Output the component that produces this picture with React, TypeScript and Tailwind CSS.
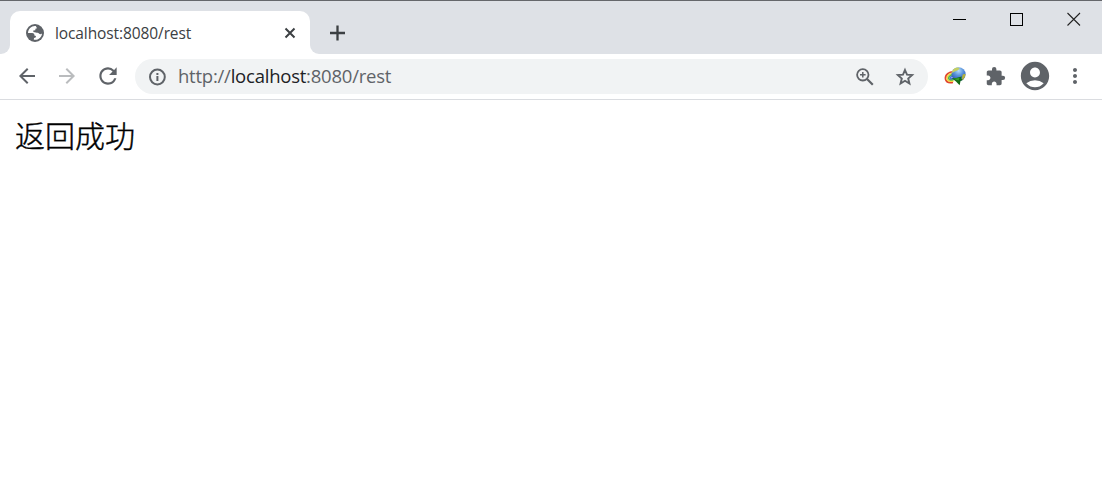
import React from 'react';
import {
  MdAccountCircle,
  MdArrowBack,
  MdArrowForward,
  MdExtension,
  MdMoreVert,
  MdRefresh,
} from 'react-icons/md';

const GlobeIcon = () => (
  <svg width="18" height="18" viewBox="0 0 18 18" className="shrink-0">
    <circle cx="9" cy="9" r="9" fill="#5f6368" />
    <path
      d="M9.8 2.1 C5.6 1.6 2.2 5 2 8.9 L6.2 9 C7.8 9.2 8.6 10 8.4 11.6 L10 12 L9.6 13.5 L8 14 L7.8 15.8 C12.4 16.4 15.8 13 16 9.4 C15 10.4 13.6 10.4 13 9.4 C12.4 8.2 10.8 8.8 9.8 8.4 L7.4 8 L7.3 6.6 L9.3 6.2 L9.4 4.8 L11 4.2 Z"
      fill="#fff"
    />
  </svg>
);

const InfoIcon = () => (
  <svg width="20" height="20" viewBox="0 0 20 20" fill="none" stroke="currentColor" strokeWidth="2" className="shrink-0">
    <circle cx="10.4" cy="10" r="7.4" />
    <path d="M10.4 9 V14 M10.4 6 V8" />
  </svg>
);

const ZoomIcon = () => (
  <svg width="20" height="20" viewBox="0 0 20 20" fill="none" stroke="currentColor" strokeWidth="1.8" className="shrink-0">
    <circle cx="7.8" cy="7.8" r="5.7" />
    <path d="M12 12 L17.8 17.8" strokeWidth="2.2" />
    <path d="M7.8 5 V10.6 M5 7.8 H10.6" strokeWidth="1.5" />
  </svg>
);

const StarIcon = () => (
  <svg width="20" height="20" viewBox="0 0 20 20" fill="none" stroke="currentColor" strokeWidth="1.9" className="shrink-0">
    <path d="M10 3 L12 7.7 L17.1 8.1 L13.2 11.5 L14.4 16.5 L10 13.8 L5.6 16.5 L6.8 11.5 L2.9 8.1 L8 7.7 Z" />
  </svg>
);

const DownloadManagerIcon = () => (
  <svg width="22" height="20" viewBox="0 0 22 20" className="shrink-0">
    <defs>
      <radialGradient id="ball" cx="0.5" cy="0.25" r="0.75">
        <stop offset="0" stopColor="#b4dcfa" />
        <stop offset="0.45" stopColor="#5a94dc" />
        <stop offset="1" stopColor="#2350ac" />
      </radialGradient>
    </defs>
    <g fill="none" strokeWidth="1.7">
      <path d="M10.5 5.8 C5 5.2 0.9 9 1.5 13 C2.1 16.2 5 17 9 16.3" stroke="#e0452f" />
      <path d="M11 7.2 C6 6.8 2.7 9.5 3.1 12.8 C3.6 15.2 6 15.6 9.5 14.8" stroke="#f3d640" />
      <path d="M11 8.7 C7 8.4 4.3 10.2 4.7 12.6 C5.2 14.2 7 14.2 9.5 13.4" stroke="#54bc45" />
      <path d="M11 10.1 C8.5 9.9 6 10.8 6.3 12.3 C7 13.2 8 12.9 10 12.2" stroke="#4a70dc" />
    </g>
    <circle cx="14.6" cy="8.2" r="7" fill="url(#ball)" />
    <path d="M8.2 5 C10 1.6 13.5 0.8 15.5 2 C15.4 4 12 4.8 8.2 7 Z" fill="#c3cf62" />
    <path d="M18.6 8.8 C19.5 8 20.6 7.8 21.5 8.4 C21 11.2 19.6 13.2 17.6 14.4 Z" fill="#b6b33a" />
    <path d="M7.8 12.2 L12 12 L17.8 10.6 L17 12.6 L18.8 14 L16.6 14.8 L15.6 19.2 L12 15.6 Z" fill="#126b15" />
    <path d="M9 12.8 L15.5 12 L14.6 14.4 Z" fill="#37a52c" />
  </svg>
);

const WindowControls = () => (
  <div className="flex pt-[11px] pr-[21px] gap-[43px]">
    <svg width="14" height="14" shapeRendering="crispEdges">
      <path d="M0 7.5 H13" stroke="#000" />
    </svg>
    <svg width="14" height="14" shapeRendering="crispEdges">
      <rect x="0.5" y="1.5" width="12" height="12" fill="none" stroke="#000" />
    </svg>
    <svg width="14" height="14">
      <path d="M0.5 1 L13 13.5 M13 1 L0.5 13.5" stroke="#222" strokeWidth="1.1" />
    </svg>
  </div>
);

const TabStrip = () => (
  <div className="flex justify-between h-[54px] bg-[#dee1e6] border-t border-[#65676b]">
    <div className="flex items-end">
      <div className="w-[10px] h-[10px] bg-white">
        <div className="w-full h-full bg-[#dee1e6] rounded-br-[9px]" />
      </div>
      <div className="flex items-center w-[300px] h-[43px] pl-4 pr-[14px] bg-white rounded-t-[10px]">
        <GlobeIcon />
        <span className="ml-[11px] pt-[2px] text-[15.5px] tracking-[-0.1px] text-[#3c4043] whitespace-nowrap">
          localhost:8080/rest
        </span>
        <svg width="12" height="12" className="ml-auto">
          <path d="M1.5 1.5 L10.5 10.5 M10.5 1.5 L1.5 10.5" stroke="#3c4043" strokeWidth="2" />
        </svg>
      </div>
      <div className="w-[10px] h-[10px] bg-white">
        <div className="w-full h-full bg-[#dee1e6] rounded-bl-[9px]" />
      </div>
      <svg width="16" height="16" className="ml-[9px] mb-[13px]">
        <path d="M8.5 0.5 V15.5 M1 8 H16" stroke="#3c4043" strokeWidth="2.3" />
      </svg>
    </div>
    <WindowControls />
  </div>
);

const AddressBar = () => (
  <div className="flex items-center w-[793px] h-[35px] ml-[14px] pl-[12px] pr-[13px] rounded-full bg-[#f1f3f4]">
    <InfoIcon />
    <span className="ml-[11px] pb-[2px] text-[18.5px] tracking-[-0.23px] text-[#5f6368] whitespace-nowrap">
      http://<span className="text-[#202124]">localhost</span>:8080/rest
    </span>
    <div className="flex gap-5 ml-auto">
      <ZoomIcon />
      <StarIcon />
    </div>
  </div>
);

const Toolbar = () => (
  <div className="flex items-center h-[46px] pl-[15px] text-[#5f6368] border-b border-[#dadce0]">
    <MdArrowBack size={24} className="mb-px" />
    <MdArrowForward size={24} className="ml-4 mb-px text-[#babcbe]" />
    <MdRefresh size={26} className="ml-4 mb-px" />
    <AddressBar />
    <div className="flex items-center ml-[16px] mb-px">
      <DownloadManagerIcon />
      <MdExtension size={21} className="ml-[19px]" />
      <MdAccountCircle size={34} className="ml-[12px]" />
      <MdMoreVert size={24} className="ml-[11px]" />
    </div>
  </div>
);

export default function App() {
  return (
    <div className="h-screen overflow-hidden bg-white font-['Open_Sans','Noto_Sans_CJK_SC',sans-serif]">
      <TabStrip />
      <Toolbar />
      <main className="pt-[12px] pl-[15px] text-[30px] leading-[44px] font-light [-webkit-text-stroke:0.4px_black] text-black font-['Noto_Sans_CJK_SC',sans-serif]">
        返回成功
      </main>
    </div>
  );
}
